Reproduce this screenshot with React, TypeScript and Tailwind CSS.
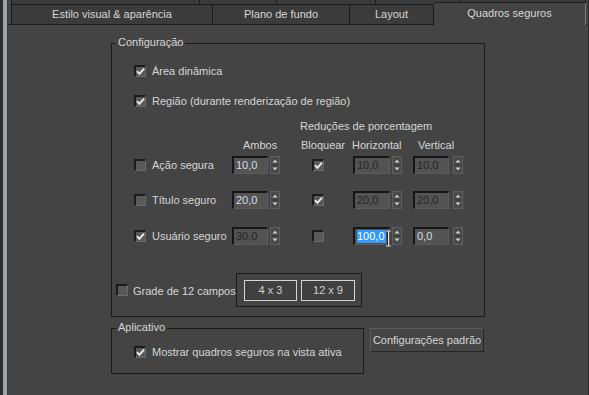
import React from "react";

function Check({ checked }: { checked?: boolean }) {
  return (
    <span className="w-[12px] h-[12px] shrink-0 bg-[#595959] border-t-2 border-l-2 border-r border-b border-t-[#1c1c1c] border-l-[#1c1c1c] border-r-[#6a6a6a] border-b-[#6a6a6a] flex items-center justify-center">
      {checked && (
        <svg width="9" height="9" viewBox="0 0 9 9">
          <path d="M1 4.2 L3.4 6.8 L8 1.6" stroke="#ececec" strokeWidth="1.9" fill="none" />
        </svg>
      )}
    </span>
  );
}

function Spinner() {
  return (
    <svg width="10" height="18" viewBox="0 0 10 18" className="shrink-0">
      <rect x="0.5" y="0.5" width="9" height="17" fill="#4a4a4a" stroke="#5f5f5f" />
      <line x1="1" y1="9" x2="9" y2="9" stroke="#353535" />
      <path d="M2.5 6.5 L5 3.8 L7.5 6.5 Z" fill="#d2d2d2" />
      <path d="M2.5 11.5 L5 14.2 L7.5 11.5 Z" fill="#d2d2d2" />
    </svg>
  );
}

function Field({ value, disabled, wide }: { value: string; disabled?: boolean; wide?: boolean }) {
  return (
    <div
      className={
        (wide ? "w-[37px] " : "w-[36px] ") +
        "h-[18px] shrink-0 bg-[#535353] border-t-2 border-l-2 border-r border-b border-t-[#161616] border-l-[#161616] border-r-[#5c5c5c] border-b-[#5c5c5c] flex items-center pl-[2px]"
      }
    >
      <span className={disabled ? "text-[#262626]" : "text-[#d8dde6]"}>{value}</span>
    </div>
  );
}

function SelectedField() {
  return (
    <div className="relative w-[37px] h-[18px] shrink-0 bg-[#535353] border-t-2 border-l-2 border-r border-b border-t-[#161616] border-l-[#161616] border-r-[#5c5c5c] border-b-[#5c5c5c] flex items-center pl-[2px]">
      <span className="bg-[#3399ff] text-white leading-[13px] pr-[1px]">100,0</span>
      <svg width="7" height="17" viewBox="0 0 7 17" className="absolute left-[30px] top-[1px]">
        <path d="M0.5 0.5 H2.5 V16.5 H0.5 M2.5 0.5 H6 M2.5 16.5 H6 M3.5 0.5 V16.5" stroke="#2a2a2a" strokeWidth="1" fill="none" />
        <path d="M1 1 H6 M1 16 H6 M3.5 1 V16" stroke="#e6e6e6" strokeWidth="1" fill="none" />
      </svg>
    </div>
  );
}

function GroupLabel({ text }: { text: string }) {
  return (
    <span className="absolute top-[-8px] left-[4px] px-[2px] bg-[#444444] leading-[13px]">{text}</span>
  );
}

function SafeRow({
  label,
  checked,
  ambos,
  ambosDisabled,
  lock,
  h,
  v,
  selected,
  vDisabled,
  className,
}: {
  label: string;
  checked?: boolean;
  ambos: string;
  ambosDisabled?: boolean;
  lock?: boolean;
  h: string;
  v: string;
  selected?: boolean;
  vDisabled?: boolean;
  className: string;
}) {
  return (
    <div className={"flex items-center h-[20px] pl-[22px] " + className}>
      <Check checked={checked} />
      <span className="ml-[6px] w-[80px] shrink-0">{label}</span>
      <Field value={ambos} disabled={ambosDisabled} />
      <span className="ml-[2px]"><Spinner /></span>
      <span className="ml-[32px]"><Check checked={lock} /></span>
      <span className="ml-[29px]">{selected ? <SelectedField /> : <Field value={h} disabled wide />}</span>
      <span className="ml-[2px]"><Spinner /></span>
      <span className="ml-[11px]"><Field value={v} disabled={vDisabled} /></span>
      <span className="ml-[4px]"><Spinner /></span>
    </div>
  );
}

export default function App() {
  return (
    <div className="w-[589px] h-[395px] bg-[#444444] flex overflow-hidden text-[11px] leading-[13px] text-[#d6d6d6] font-['Liberation_Sans',Arial,sans-serif]">
      <div className="w-[3px] shrink-0 bg-[#2c2c2c]" />
      <div className="w-[4px] shrink-0 bg-[#9ea3aa]" />
      <div className="w-[1px] shrink-0 bg-[#3a3a3a]" />
      <div className="w-[579px] shrink-0 flex flex-col">
        {/* back tab row */}
        <div className="h-[4px] flex pl-[3px]">
          <div className="w-[188px] bg-[#3b3b3b] border-l border-[#1c1c1c]" />
          <div className="w-[77px] bg-[#3b3b3b] border-l border-[#1c1c1c]" />
          <div className="w-[99px] bg-[#3b3b3b] border-l border-[#1c1c1c]" />
          <div className="w-[85px] bg-[#3b3b3b] border-l border-[#1c1c1c]" />
          <div className="w-[126px] bg-[#3b3b3b] border-l border-r border-[#1c1c1c]" />
        </div>
        {/* main tab row */}
        <div className="h-[21px] flex items-start pl-[3px] border-b border-[#1c1c1c]">
          <div className="w-[202px] h-[20px] bg-[#3b3b3b] border-t border-l border-r border-[#1c1c1c] flex items-center justify-center">
            Estilo visual &amp; aparência
          </div>
          <div className="w-[137px] h-[20px] bg-[#3b3b3b] border-t border-r border-[#1c1c1c] flex items-center justify-center">
            Plano de fundo
          </div>
          <div className="w-[84px] h-[20px] bg-[#3b3b3b] border-t border-r border-[#1c1c1c] flex items-center justify-center">
            Layout
          </div>
          <div className="w-[152px] h-[23px] -mt-[2px] bg-[#444444] border-t border-r border-t-[#1c1c1c] border-r-[#7c7c7c] rounded-t-[3px] flex items-center justify-center pb-[2px]">
            Quadros seguros
          </div>
        </div>

        {/* panel */}
        <div className="flex flex-col">
          <div className="relative ml-[103px] mt-[18px] w-[374px] h-[274px] border border-[#1a1a1a] flex flex-col">
            <GroupLabel text="Configuração" />
            <div className="flex items-center h-[20px] pl-[22px] mt-[17px]">
              <Check checked />
              <span className="ml-[6px]">Área dinâmica</span>
            </div>
            <div className="flex items-center h-[20px] pl-[22px] mt-[10px]">
              <Check checked />
              <span className="ml-[6px]">Região (durante renderização de região)</span>
            </div>
            <div className="h-[14px] flex items-center pl-[188px] mt-[8px]">Reduções de porcentagem</div>
            <div className="h-[14px] flex items-center pl-[131px] mt-[5px]">
              <span className="w-[58px] shrink-0">Ambos</span>
              <span className="w-[51px] shrink-0">Bloquear</span>
              <span className="w-[66px] shrink-0">Horizontal</span>
              <span>Vertical</span>
            </div>
            <SafeRow className="mt-[3px]" label="Ação segura" ambos="10,0" lock h="10,0" v="10,0" vDisabled />
            <SafeRow className="mt-[15px]" label="Título seguro" ambos="20,0" lock h="20,0" v="20,0" vDisabled />
            <SafeRow className="mt-[16px]" label="Usuário seguro" checked ambos="30,0" ambosDisabled h="100,0" selected v="0,0" />
            <div className="flex items-center pl-[4px] mt-[27px]">
              <Check />
              <span className="ml-[5px] w-[103px] shrink-0 pt-[2px]">Grade de 12 campos</span>
              <div className="w-[126px] h-[34px] border border-[#1a1a1a] flex items-center pl-[7px] gap-[4px]">
                <div className="w-[53px] h-[21px] border border-[#d4d4d4] bg-[#404040] flex items-center justify-center text-[#cfcfcf]">
                  4 x 3
                </div>
                <div className="w-[54px] h-[21px] border border-[#d4d4d4] bg-[#404040] flex items-center justify-center text-[#cfcfcf]">
                  12 x 9
                </div>
              </div>
            </div>
          </div>

          <div className="flex items-start ml-[103px] mt-[11px]">
            <div className="relative w-[253px] h-[46px] border border-[#1a1a1a] flex flex-col">
              <GroupLabel text="Aplicativo" />
              <div className="flex items-center h-[20px] pl-[22px] mt-[13px]">
                <Check checked />
                <span className="ml-[6px]">Mostrar quadros seguros na vista ativa</span>
              </div>
            </div>
            <div className="ml-[6px] w-[114px] h-[24px] bg-[#464646] border border-t-[#5c5c5c] border-l-[#5c5c5c] border-r-[#262626] border-b-[#262626] flex items-center justify-center">
              Configurações padrão
            </div>
          </div>
        </div>
      </div>
      <div className="w-[1px] shrink-0 bg-[#444444]" />
      <div className="w-[2px] shrink-0 bg-[#2a2a2a]" />
    </div>
  );
}
